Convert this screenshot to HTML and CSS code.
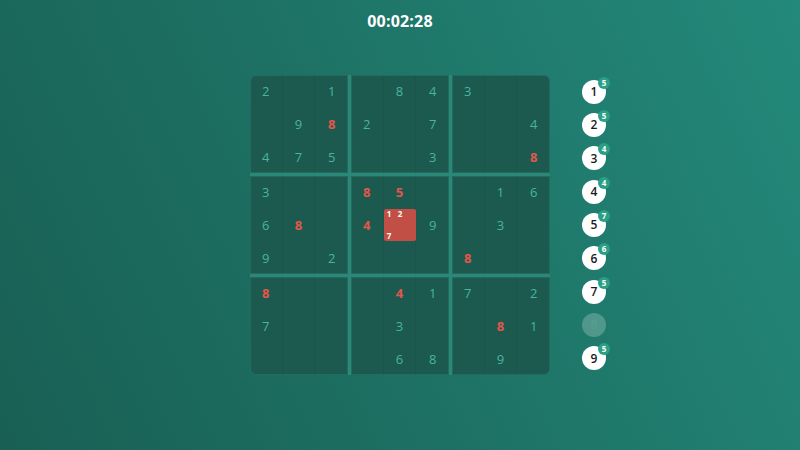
FILE: index.html
```html
<!DOCTYPE html>
<html>
<head>
<meta charset="utf-8">
<link rel="stylesheet" href="styles.css">
</head>
<body>
<div class="app">
  <div class="timer">00:02:28</div>
  <div class="stage">
    <div class="spacer"></div>
    <div class="board">
      <div class="box tl">
        <div class="cell">2</div><div class="cell"></div><div class="cell">1</div>
        <div class="cell"></div><div class="cell">9</div><div class="cell err">8</div>
        <div class="cell">4</div><div class="cell">7</div><div class="cell">5</div>
      </div>
      <div class="box">
        <div class="cell"></div><div class="cell">8</div><div class="cell">4</div>
        <div class="cell">2</div><div class="cell"></div><div class="cell">7</div>
        <div class="cell"></div><div class="cell"></div><div class="cell">3</div>
      </div>
      <div class="box tr">
        <div class="cell">3</div><div class="cell"></div><div class="cell"></div>
        <div class="cell"></div><div class="cell"></div><div class="cell">4</div>
        <div class="cell"></div><div class="cell"></div><div class="cell err">8</div>
      </div>
      <div class="box">
        <div class="cell">3</div><div class="cell"></div><div class="cell"></div>
        <div class="cell">6</div><div class="cell err">8</div><div class="cell"></div>
        <div class="cell">9</div><div class="cell"></div><div class="cell">2</div>
      </div>
      <div class="box">
        <div class="cell err">8</div><div class="cell err">5</div><div class="cell"></div>
        <div class="cell err">4</div>
        <div class="cell selected">
          <span class="pm">1</span><span class="pm">2</span><span class="pm"></span>
          <span class="pm"></span><span class="pm"></span><span class="pm"></span>
          <span class="pm">7</span><span class="pm"></span><span class="pm"></span>
        </div>
        <div class="cell">9</div>
        <div class="cell"></div><div class="cell"></div><div class="cell"></div>
      </div>
      <div class="box">
        <div class="cell"></div><div class="cell">1</div><div class="cell">6</div>
        <div class="cell"></div><div class="cell">3</div><div class="cell"></div>
        <div class="cell err">8</div><div class="cell"></div><div class="cell"></div>
      </div>
      <div class="box bl">
        <div class="cell err">8</div><div class="cell"></div><div class="cell"></div>
        <div class="cell">7</div><div class="cell"></div><div class="cell"></div>
        <div class="cell"></div><div class="cell"></div><div class="cell"></div>
      </div>
      <div class="box">
        <div class="cell"></div><div class="cell err">4</div><div class="cell">1</div>
        <div class="cell"></div><div class="cell">3</div><div class="cell"></div>
        <div class="cell"></div><div class="cell">6</div><div class="cell">8</div>
      </div>
      <div class="box br">
        <div class="cell">7</div><div class="cell"></div><div class="cell">2</div>
        <div class="cell"></div><div class="cell err">8</div><div class="cell">1</div>
        <div class="cell"></div><div class="cell">9</div><div class="cell"></div>
      </div>
    </div>
    <div class="numbers">
      <div class="num-row"><div class="num">1<span class="badge">5</span></div></div>
      <div class="num-row"><div class="num">2<span class="badge">5</span></div></div>
      <div class="num-row"><div class="num">3<span class="badge">4</span></div></div>
      <div class="num-row"><div class="num">4<span class="badge">4</span></div></div>
      <div class="num-row"><div class="num">5<span class="badge">7</span></div></div>
      <div class="num-row"><div class="num">6<span class="badge">6</span></div></div>
      <div class="num-row"><div class="num">7<span class="badge">5</span></div></div>
      <div class="num-row"><div class="num done">8</div></div>
      <div class="num-row"><div class="num">9<span class="badge">5</span></div></div>
    </div>
  </div>
</div>
</body>
</html>
```
FILE: styles.css
```css
html, body {
  margin: 0;
  padding: 0;
  width: 800px;
  height: 450px;
  overflow: hidden;
}
body {
  background: linear-gradient(65deg, #195f54 0%, #1d7164 45%, #23897a 100%);
  font-family: "Open Sans", "Noto Sans", sans-serif;
}
.app {
  display: flex;
  flex-direction: column;
  align-items: stretch;
}
.timer {
  height: 42px;
  line-height: 42px;
  text-align: center;
  color: #ffffff;
  font-weight: 700;
  font-size: 16px;
  letter-spacing: 0.2px;
}
.stage {
  margin-top: 33px;
  display: grid;
  grid-template-columns: 1fr 300px 1fr;
}
.board {
  width: 300px;
  height: 300px;
  display: grid;
  grid-template-columns: repeat(3, 98px);
  grid-template-rows: repeat(3, 98px);
  gap: 3px;
  background: #2b8878;
  border-radius: 6px;
}
.box {
  background: #1c594f;
  display: grid;
  grid-template-columns: repeat(3, 1fr);
  grid-template-rows: repeat(3, 1fr);
  box-shadow: inset 0 0 0 1px rgba(60, 160, 140, 0.25);
}
.box.tl { border-top-left-radius: 6px; }
.box.tr { border-top-right-radius: 6px; }
.box.bl { border-bottom-left-radius: 6px; }
.box.br { border-bottom-right-radius: 6px; }
.cell {
  display: flex;
  align-items: center;
  justify-content: center;
  color: #47b59f;
  font-size: 13px;
  font-weight: 500;
  border-right: 1px solid rgba(0, 0, 0, 0.04);
}
.cell:nth-child(3n) { border-right: none; }
.cell.err {
  color: #e2574c;
  font-weight: 700;
}
.cell.selected {
  background: #c14f45;
  border-radius: 2px;
  display: grid;
  grid-template-columns: repeat(3, 1fr);
  grid-template-rows: repeat(3, 1fr);
  border-right: none;
}
.pm {
  color: #ffffff;
  font-size: 8px;
  font-weight: 700;
  display: flex;
  align-items: center;
  justify-content: center;
  line-height: 1;
}
.numbers {
  padding-left: 32px;
  display: flex;
  flex-direction: column;
}
.num-row {
  height: 33.33px;
  display: flex;
  align-items: center;
}
.num {
  position: relative;
  width: 24px;
  height: 24px;
  border-radius: 50%;
  background: #ffffff;
  color: #1a1a1a;
  font-size: 12px;
  font-weight: 600;
  display: flex;
  align-items: center;
  justify-content: center;
}
.num.done {
  background: rgba(255, 255, 255, 0.22);
  color: rgba(255, 255, 255, 0.08);
}
.badge {
  position: absolute;
  top: -3px;
  right: -4px;
  width: 12px;
  height: 12px;
  border-radius: 50%;
  background: #2a9f84;
  color: #ffffff;
  font-size: 8px;
  font-weight: 700;
  display: flex;
  align-items: center;
  justify-content: center;
  line-height: 1;
}
```
